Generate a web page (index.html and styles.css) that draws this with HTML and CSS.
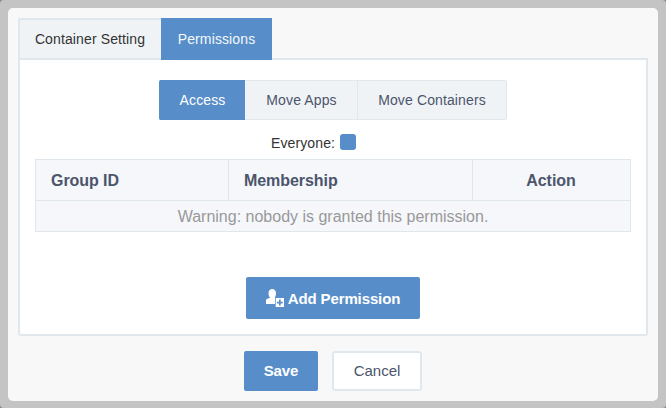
FILE: index.html
```html
<!DOCTYPE html>
<html lang="en">
<head>
<meta charset="utf-8">
<title>Container Setting</title>
<link rel="stylesheet" href="styles.css">
</head>
<body>
<div class="frame">
  <main class="dialog">
    <nav class="tabs">
      <span class="tab tab-setting">Container Setting</span>
      <span class="tab tab-active">Permissions</span>
    </nav>
    <section class="panel">
      <div class="segments">
        <span class="segment segment-active">Access</span>
        <span class="segment segment-apps">Move Apps</span>
        <span class="segment segment-containers">Move Containers</span>
      </div>
      <div class="everyone"><span>Everyone:</span><i class="check"></i></div>
      <div class="table">
        <div class="row head">
          <span class="cell">Group ID</span>
          <span class="cell">Membership</span>
          <span class="cell cell-center">Action</span>
        </div>
        <div class="row-empty"><span>Warning: nobody is granted this permission.</span></div>
      </div>
      <button class="button add">
        <svg class="icon" viewBox="0 0 18 18" width="18" height="18">
          <path fill="#fff" d="M6.200 0C3.900 0 2.500 1.700 2.500 4.200c0 2 .7 3.700 1.700 4.600L1.400 9.700C.4 10.100 0 10.800 0 11.800V15h9V8.200C9.600 7.200 10 5.700 10 4.200 10 1.700 8.500 0 6.200 0Z"/>
          <path fill="#fff" fill-rule="evenodd" d="M10 9H18v9H9.700V9ZM13 10.500v2.200h-2v1.700h2v2.200h1.700v-2.200h2v-1.700h-2v-2.200Z"/>
        </svg>
        <span>Add Permission</span>
      </button>
    </section>
    <footer class="actions">
      <button class="button save"><span>Save</span></button>
      <button class="button cancel"><span>Cancel</span></button>
    </footer>
  </main>
</div>
</body>
</html>
```
FILE: styles.css
```css
* { box-sizing: border-box; }
body {
  margin: 0;
  background: #8b8b8b;
  font-family: "Liberation Sans", Arial, sans-serif;
  font-size: 14px;
  letter-spacing: 0.12px;
  color: #333;
}
.frame {
  height: 408px;
  padding: 8px 8px 7px;
  background: #c4c4c4;
  border-radius: 4px;
}
.dialog {
  height: 393px;
  padding: 10px;
  background: #f8f8f8;
  border-radius: 5px;
}
.tabs { display: flex; height: 42px; position: relative; z-index: 1; }
.tab {
  display: flex;
  align-items: center;
  justify-content: center;
  white-space: nowrap;
}
.tab-setting {
  width: 143px;
  padding-right: 1px;
  background: #eff3f6;
  border: 2px solid #e1e8ed;
  border-right: 0;
}
.tab-active { width: 111px; background: #578ec9; color: #f5f8fa; }
.panel {
  display: flex;
  flex-direction: column;
  align-items: center;
  height: 278px;
  margin-top: -2px;
  padding: 20px 15px 0;
  background: #fff;
  border: 2px solid #e1e8ed;
  border-radius: 0 0 3px 3px;
}
.segments { display: flex; height: 40px; color: #4c556b; }
.segment {
  display: flex;
  align-items: center;
  justify-content: center;
  white-space: nowrap;
  background: #eff3f6;
  border: 1px solid #e1e8ed;
  border-left: 0;
}
.segment-active {
  width: 86px;
  padding-left: 2px;
  background: #578ec9;
  border-color: #578ec9;
  color: #fff;
  border-radius: 2px 0 0 2px;
}
.segment-apps { width: 113px; padding-left: 1px; }
.segment-containers { width: 149px; border-radius: 0 2px 2px 0; }
.everyone {
  display: flex;
  align-items: center;
  gap: 5px;
  height: 17px;
  margin: 13px 39px 9px 0;
}
.everyone span { padding-top: 2px; }
.check { width: 16px; height: 16px; margin-top: 1px; background: #578ec9; border-radius: 3px; }
.table {
  width: 596px;
  height: 73px;
  border: 1px solid #dfe7ec;
  background: #f5f7fb;
  font-size: 16px;
  letter-spacing: 0;
}
.row {
  display: grid;
  grid-template-columns: 193px 244px 1fr;
  height: 41px;
  border-bottom: 1px solid #dfe7ec;
  color: #4c556b;
  font-weight: bold;
  letter-spacing: -0.06px;
}
.cell { display: flex; align-items: center; padding: 2px 0 0 15px; border-right: 1px solid #dfe7ec; }
.cell-center { justify-content: center; padding: 2px 1px 0 0; border: 0; }
.row-empty {
  display: flex;
  align-items: center;
  justify-content: center;
  height: 30px;
  padding-top: 2px;
  color: #999;
}
.button {
  display: flex;
  align-items: center;
  justify-content: center;
  padding: 0;
  border: 0;
  border-radius: 2px;
  background: #578ec9;
  color: #fff;
  font: bold 15px "Liberation Sans", Arial, sans-serif;
  letter-spacing: -0.12px;
}
.add { width: 174px; height: 42px; margin-top: 45px; gap: 4px; }
.add .icon { margin-top: -1px; }
.icon { display: block; }
.actions { display: flex; justify-content: center; gap: 14px; margin-top: 15px; }
.save { width: 74px; height: 40px; padding-bottom: 1px; }
.cancel {
  width: 90px;
  height: 40px;
  padding-bottom: 1px;
  border: 2px solid #e1e8ed;
  border-radius: 3px;
  background: #fff;
  color: #4c556b;
  font-weight: normal;
  letter-spacing: 0;
}
```
